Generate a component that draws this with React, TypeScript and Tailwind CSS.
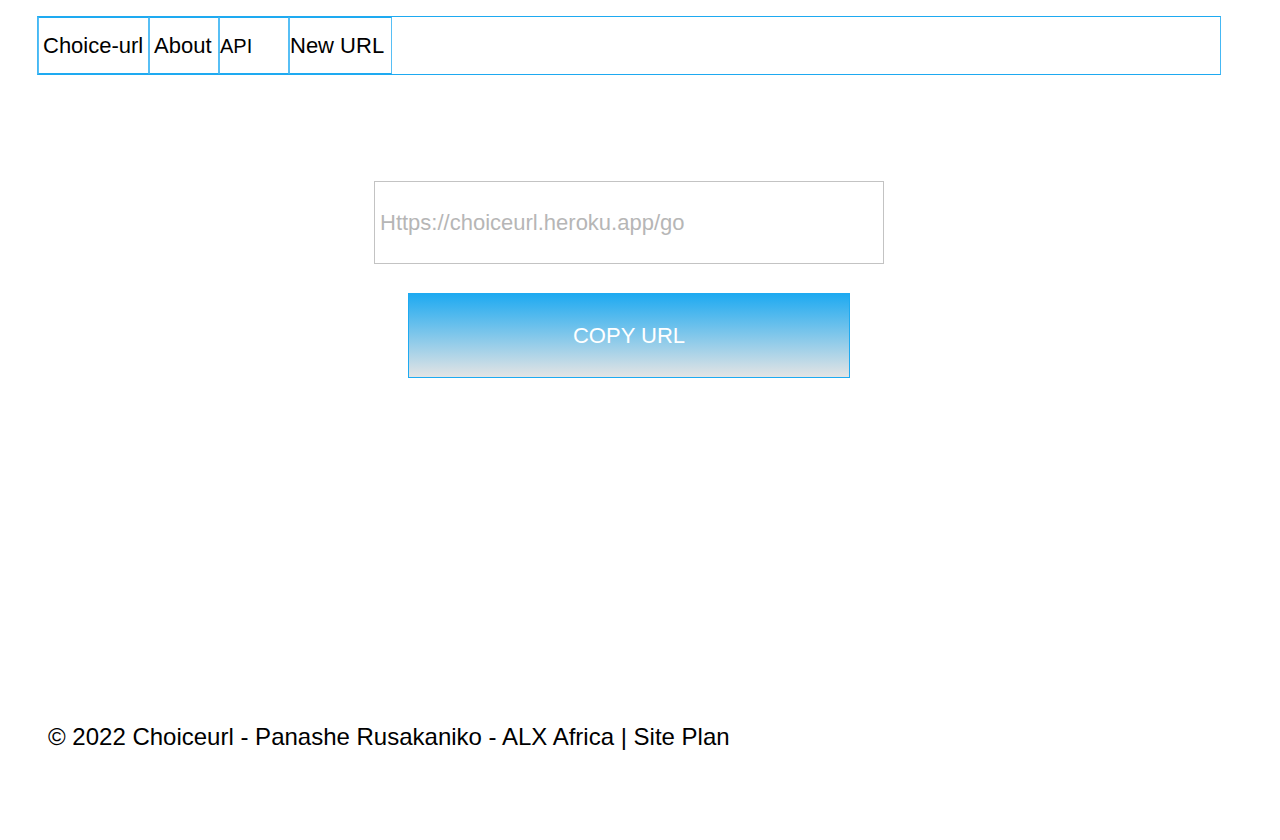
const cell = "flex h-full items-center border border-x-[#57bff5] border-y-[#1eaaf1]";

export default function App() {
  return (
    <div className="flex min-h-screen flex-col bg-white px-[37px] pt-4 pb-[87px] font-['Liberation_Sans',Arial,sans-serif] text-black">
      <header className="mr-[22px] border border-x-[#45b8f4] border-y-[#1eaaf1]">
        <nav aria-label="Main" className="flex h-[57px] text-[22px] leading-6">
          <a href="#home" className={`${cell} w-[111px] pl-1`}>Choice-url</a>
          <a href="#about" className={`${cell} w-[70px] pl-1`}>About</a>
          <a href="#api" className={`${cell} w-[70px] text-[20px]`}>API</a>
          <a href="#new" className={`${cell} w-[103px]`}>New URL</a>
        </nav>
      </header>
      <main className="mr-[22px] mt-[106px] flex flex-1 flex-col items-center gap-[29px] text-[22px] leading-6">
        <input
          aria-label="Short URL"
          placeholder="Https://choiceurl.heroku.app/go"
          className="h-[83px] w-[510px] max-w-full border border-[#c3c3c3] px-[5px] placeholder:text-[#b6b6b6]"
        />
        <button
          type="button"
          className="h-[85px] w-[442px] max-w-full border border-[#1eaaf1] bg-linear-to-b/srgb from-[#1eaaf1] to-[#e4e4e4] text-white"
        >
          COPY URL
        </button>
      </main>
      <footer className="pl-[11px] text-[24px] leading-8">
        © 2022 Choiceurl - Panashe Rusakaniko - ALX Africa | <a href="#site-plan">Site Plan</a>
      </footer>
    </div>
  );
}
